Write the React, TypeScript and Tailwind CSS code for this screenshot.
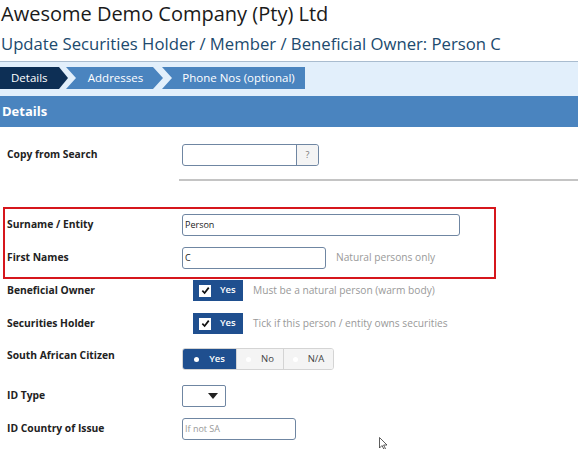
import { ReactNode } from "react";

const FONT = "font-['Open_Sans',sans-serif]";

function Label({ children }: { children: ReactNode }) {
  return <div className="w-[175px] shrink-0 text-[10.3px] font-bold text-[#222]">{children}</div>;
}

function Row({ children, className = "" }: { children: ReactNode; className?: string }) {
  return <div className={`flex items-center ${className}`}>{children}</div>;
}

function Hint({ children }: { children: ReactNode }) {
  return <span className="ml-[10px] text-[10.2px] text-[#999]">{children}</span>;
}

function CheckYes() {
  return (
    <div className="ml-[11px] flex h-[21px] w-[50px] items-center bg-[#1f4f8f] pl-[6px]">
      <span className="flex h-[12px] w-[12px] items-center justify-center bg-white">
        <svg width="9" height="9" viewBox="0 0 10 10">
          <path d="M1.5 5.2 L4 7.8 L8.6 1.8" fill="none" stroke="#111" strokeWidth="1.9" />
        </svg>
      </span>
      <span className="ml-[9px] text-[9.5px] font-semibold text-white">Yes</span>
    </div>
  );
}

function RadioOpt({ label, active, w }: { label: string; active?: boolean; w: string }) {
  return (
    <div
      className={`flex h-full items-center justify-center gap-[10px] text-[9.5px] ${w} ${
        active ? "bg-[#1f4f8f] font-semibold text-white" : "border-l border-[#d4d4d4] bg-[#f4f4f4] text-[#444]"
      }`}
    >
      <span className="h-[5px] w-[5px] rounded-full bg-white" />
      {label}
    </div>
  );
}

export default function App() {
  return (
    <div className={`relative h-[449px] w-[578px] overflow-hidden bg-white ${FONT}`}>
      {/* Titles */}
      <div className="pl-[1px] text-[20px] leading-[28px] text-[#1a1a1a]">Awesome Demo Company (Pty) Ltd</div>
      <div className="mt-[4px] pl-[1px] text-[16.7px] leading-[24px] text-[#204a6e]">
        Update Securities Holder / Member / Beneficial Owner: Person C
      </div>

      {/* Wizard steps */}
      <div className="mt-[5px] h-[35px] border-t border-[#a9bccf] bg-[#e2effb] pt-[5px]">
        <div className="flex h-[22px] text-[11.5px] text-white">
          <div className="flex w-[68px] items-center pl-[11px] bg-[#0d2f55] [clip-path:polygon(0_0,59px_0,100%_50%,59px_100%,0_100%)]">
            Details
          </div>
          <div className="-ml-[2px] flex w-[97px] items-center justify-center bg-[#4a84bf] pl-[2px] [clip-path:polygon(0_0,87px_0,100%_50%,87px_100%,0_100%,10px_50%)]">
            Addresses
          </div>
          <div className="-ml-[1px] flex w-[143px] items-center justify-center bg-[#4a84bf] pl-[10px] [clip-path:polygon(0_0,100%_0,100%_100%,0_100%,10px_50%)]">
            Phone Nos (optional)
          </div>
        </div>
      </div>

      {/* Section header */}
      <div className="flex h-[31px] items-center bg-[#4a84bf] pl-[2px] text-[13px] font-bold text-white">Details</div>

      {/* Form */}
      <div className="pl-[7px]">
        <Row className="mt-[17px] h-[22px]">
          <Label>Copy from Search</Label>
          <div className="flex h-[22px] rounded-[3px] border border-[#6f86a2]">
            <div className="w-[113px]" />
            <div className="flex w-[22px] items-center justify-center rounded-r-[3px] border-l border-[#6f86a2] bg-[#f4f4f4] text-[9px] text-[#777]">
              ?
            </div>
          </div>
        </Row>
        <div className="ml-[172px] mt-[13px] h-[2px] bg-[#c4c4c4]" />

        {/* Highlighted rows */}
        <div className="-ml-[4px] mt-[26px] w-[493px] border-2 border-[#d6161c] pb-[8px] pl-[2px] pt-[5px]">
          <Row className="h-[22px]">
            <Label>Surname / Entity</Label>
            <div className="flex h-[22px] w-[278px] items-center rounded-[3px] border border-[#6f86a2] pl-[2px] text-[9px] text-[#222]">
              Person
            </div>
          </Row>
          <Row className="mt-[11px] h-[22px]">
            <Label>First Names</Label>
            <div className="flex h-[22px] w-[144px] items-center rounded-[3px] border border-[#6f86a2] pl-[2px] text-[9px] text-[#222]">
              C
            </div>
            <Hint>Natural persons only</Hint>
          </Row>
        </div>

        <Row className="mt-[1px] h-[21px]">
          <Label>Beneficial Owner</Label>
          <CheckYes />
          <Hint>Must be a natural person (warm body)</Hint>
        </Row>
        <Row className="mt-[12px] h-[21px]">
          <Label>Securities Holder</Label>
          <CheckYes />
          <Hint>Tick if this person / entity owns securities</Hint>
        </Row>
        <Row className="mt-[14px] h-[22px] items-start">
          <Label>South African Citizen</Label>
          <div className="flex h-[22px] overflow-hidden rounded-[3px] border border-[#d4d4d4]">
            <RadioOpt label="Yes" active w="w-[53px]" />
            <RadioOpt label="No" w="w-[47px]" />
            <RadioOpt label="N/A" w="w-[50px]" />
          </div>
        </Row>
        <Row className="mt-[15px] h-[22px]">
          <Label>ID Type</Label>
          <div className="flex h-[22px] w-[44px] items-center justify-end rounded-[2px] border border-[#6f86a2] pr-[7px]">
            <svg width="10" height="6" viewBox="0 0 10 6">
              <path d="M0 0 H10 L5 6 Z" fill="#222" />
            </svg>
          </div>
        </Row>
        <Row className="mt-[11px] h-[22px]">
          <Label>ID Country of Issue</Label>
          <div className="flex h-[22px] w-[114px] items-center rounded-[3px] border border-[#6f86a2] pl-[2px] text-[9px] text-[#999]">
            If not SA
          </div>
        </Row>
      </div>

      {/* Mouse pointer */}
      <svg className="absolute left-[379px] top-[437px]" width="10" height="14" viewBox="0 0 10 14">
        <path d="M0.5 0.5 V11 L3 8.5 L5 12.5 L6.5 11.8 L4.6 8 H8 Z" fill="#fff" stroke="#333" strokeWidth="0.8" />
      </svg>
    </div>
  );
}
